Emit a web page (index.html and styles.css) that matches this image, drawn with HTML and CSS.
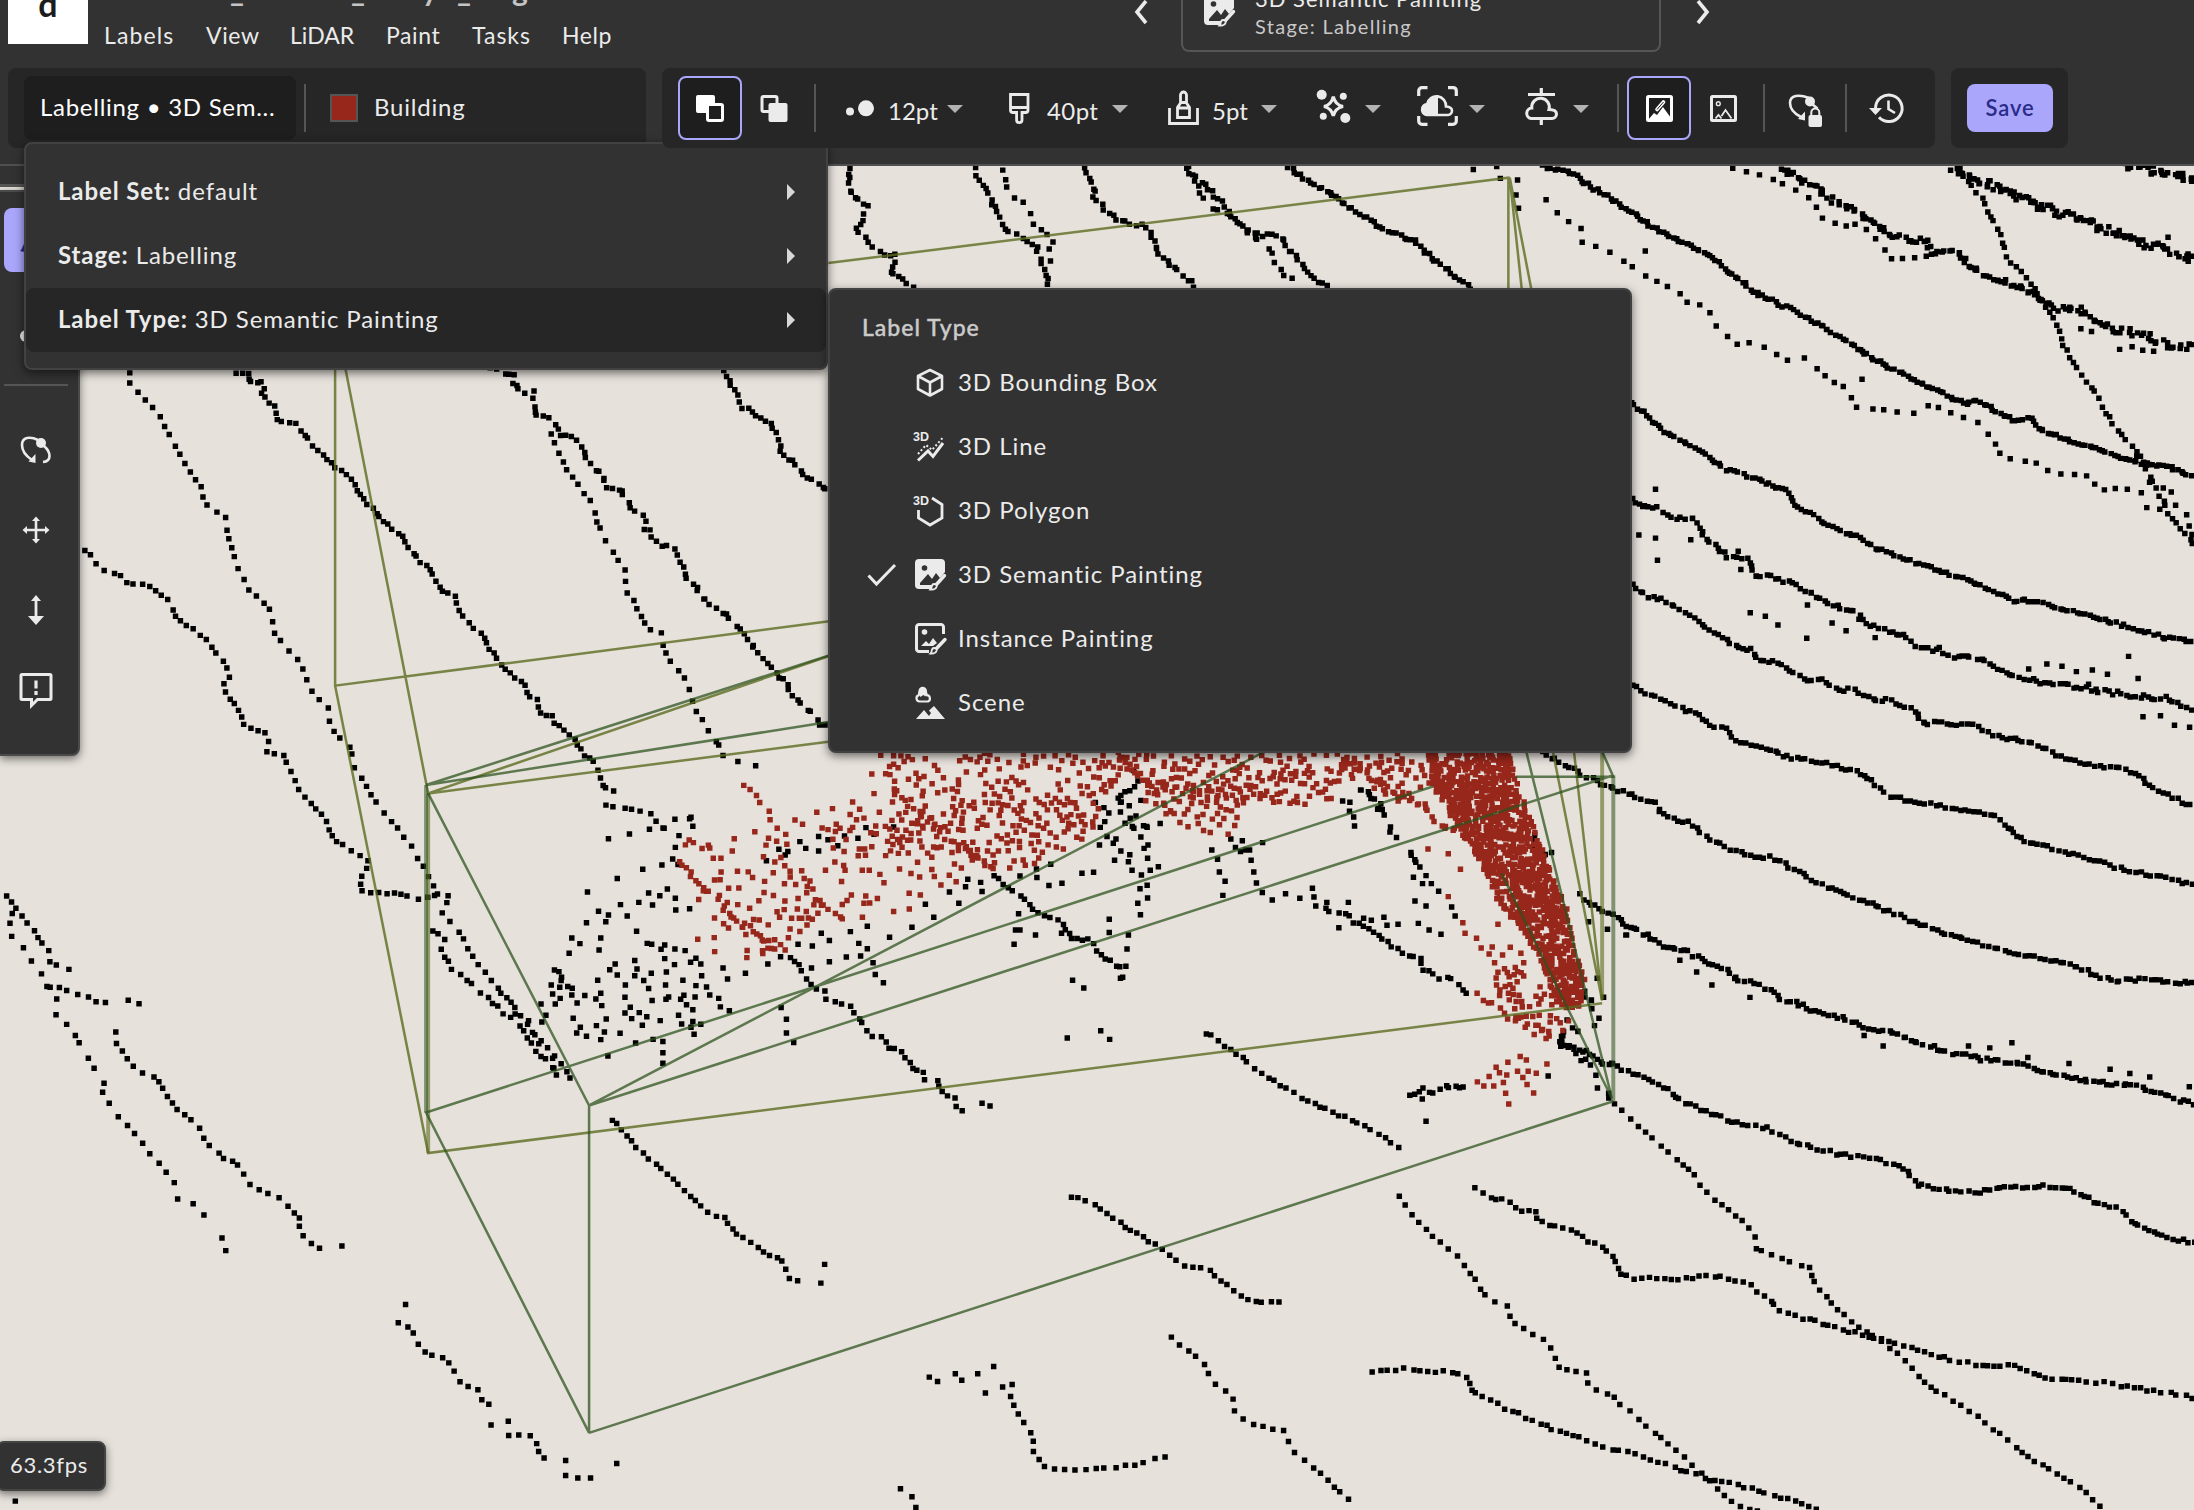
FILE: index.html
```html
<!DOCTYPE html>
<html lang="en">
<head>
<meta charset="utf-8">
<title>Point cloud labelling</title>
<link rel="stylesheet" href="styles.css">
</head>
<body>
<svg class="defs" aria-hidden="true">
  <symbol id="semantic" viewBox="0 0 32 32">
    <path fill="currentColor" d="M4 0h22a4 4 0 0 1 4 4v9l-5 6-4-5-4 6-4-5-8 9v2h12v4H4a4 4 0 0 1-4-4V4a4 4 0 0 1 4-4z"/>
    <circle cx="9.500" cy="9" r="2.800" fill="#323232"/>
    <path d="M29.500 16.500 20.500 26.500" stroke="currentColor" stroke-width="3.400" stroke-linecap="round"/>
    <path d="M19 25c2 0 3 1.200 2.500 3-.8 2-3.500 2.800-6 2.500 1.200-1 1-2 1.300-3.200.3-1.300 1-2.300 2.200-2.300z" fill="#323232" stroke="currentColor" stroke-width="1.800"/>
  </symbol>
  <symbol id="caret" viewBox="0 0 16 8"><path fill="#b3b3b3" d="M0 0h16L8 8z"/></symbol>
  <symbol id="orbit" viewBox="0 0 40 40">
    <path d="M22 10C14 6 6 7 6 15c0 7 4 11 10 15" fill="none" stroke="currentColor" stroke-width="2.600"/>
    <path fill="currentColor" d="M19.500 24v9l-7-1.500z"/>
    <circle cx="25" cy="13" r="5" fill="currentColor"/>
    <path d="M28 16c7 6 8 15-1 16" fill="none" stroke="currentColor" stroke-width="2.600"/>
  </symbol>
</svg>

<header class="header">
  <div class="topbar">
    <div class="logo"><span>d</span></div>
    <div class="project">
      <div class="project-name"><span>_</span><span>_</span><span>y</span><span>_</span><span>g</span></div>
      <nav class="menubar"><a class="m-labels">Labels</a><a class="m-view">View</a><a class="m-lidar">LiDAR</a><a class="m-paint">Paint</a><a class="m-tasks">Tasks</a><a class="m-help">Help</a></nav>
    </div>
    <svg class="chevron prev" viewBox="0 0 14 28"><path d="M12 2 3 13l9 11"/></svg>
    <div class="task-card">
      <svg class="icon32"><use href="#semantic"/></svg>
      <div class="task-text"><div class="task-name">3D Semantic Painting</div><div class="task-stage">Stage: Labelling</div></div>
    </div>
    <svg class="chevron next" viewBox="0 0 14 28"><path d="M2 2l9 11-9 11"/></svg>
  </div>

  <div class="toolbar">
    <div class="group group-type">
      <div class="type-button"><span>Labelling • 3D Sem...</span></div>
      <i class="sep"></i>
      <i class="swatch"></i>
      <span class="class-name">Building</span>
      <section class="menu main-menu">
        <div class="menu-row"><span><b>Label Set:</b> default</span><i class="arrow"></i></div>
        <div class="menu-row"><span><b>Stage:</b> Labelling</span><i class="arrow"></i></div>
        <div class="menu-row current"><span><b>Label Type:</b> 3D Semantic Painting</span><i class="arrow"></i></div>
      </section>
      <section class="menu sub-menu">
        <h2>Label Type</h2>
        <div class="option"><i class="check"></i>
          <svg class="icon32" viewBox="0 0 32 32"><path d="M15 3 27 9v13L15 28.500 3 22V9zM3 9l12 6.500L27 9M15 15.500v13" fill="none" stroke="currentColor" stroke-width="2.600" stroke-linejoin="round"/></svg><span>3D Bounding Box</span></div>
        <div class="option"><i class="check"></i>
          <svg class="icon32" viewBox="0 0 32 32"><text x="-2" y="10" class="tiny">3D</text><path d="M3 29.500 13 20l5 5.500L28 12" fill="none" stroke="currentColor" stroke-width="3"/><path d="M3 23 11 14l6 5L27.500 7" fill="none" stroke="currentColor" stroke-width="2" stroke-dasharray="2 2.200"/></svg><span>3D Line</span></div>
        <div class="option"><i class="check"></i>
          <svg class="icon32" viewBox="0 0 32 32"><text x="-2" y="10" class="tiny">3D</text><path d="M17 3l10 6.500v13.500L15 30 3.500 23v-8" fill="none" stroke="currentColor" stroke-width="2.800"/></svg><span>3D Polygon</span></div>
        <div class="option"><i class="check"><svg viewBox="0 0 30 24"><path d="M1.500 12.500 9.500 21 28 2" fill="none" stroke="currentColor" stroke-width="3"/></svg></i>
          <svg class="icon32"><use href="#semantic"/></svg><span>3D Semantic Painting</span></div>
        <div class="option"><i class="check"></i>
          <svg class="icon32" viewBox="0 0 32 32"><path d="M28.500 11V4a2.500 2.500 0 0 0-2.500-2.500H4A2.500 2.500 0 0 0 1.500 4v22A2.500 2.500 0 0 0 4 28.500h10" fill="none" stroke="currentColor" stroke-width="3"/><circle cx="9.500" cy="9" r="2.800" fill="currentColor"/><path d="M6 23l5-5 3 3 4-6 4 5-4 3z" fill="currentColor"/><path d="M30 16.500 20.500 26.500" stroke="currentColor" stroke-width="3.400" stroke-linecap="round"/><path d="M19 25c2 0 3 1.200 2.500 3-.8 2-3.500 2.800-6 2.500 1.200-1 1-2 1.300-3.200.3-1.300 1-2.300 2.200-2.300z" fill="#323232" stroke="currentColor" stroke-width="1.800"/></svg><span>Instance Painting</span></div>
        <div class="option"><i class="check"></i>
          <svg class="icon32" viewBox="0 0 32 32"><path d="M4.500 14.500a3.300 3.300 0 0 1-.8-6.400L4.500 5a3.400 3.400 0 0 1 6.500 0l.8 3.200a3.300 3.300 0 0 1 1.200 6.300z" fill="none" stroke="currentColor" stroke-width="2.200"/><path d="M3.500 6.500V4a4.200 4.200 0 0 1 8.400 0v2.500l-1.500 3-2-1.500-3 2z" fill="currentColor"/><path d="M1 32 9 23l5 6 2-3-2-2.500 5-4.500L30 32z" fill="currentColor"/></svg><span>Scene</span></div>
      </section>
    </div>

    <div class="group group-tools">
      <div class="btn active"><svg class="icon40" viewBox="0 0 40 40"><rect x="6" y="7" width="19" height="18" rx="2" fill="currentColor"/><rect x="17.500" y="16.500" width="15" height="16" rx="1.500" fill="#1e1e1e" stroke="currentColor" stroke-width="3"/></svg></div>
      <div class="btn"><svg class="icon40" viewBox="0 0 40 40"><rect x="8" y="8.500" width="15" height="15" rx="1.500" fill="none" stroke="currentColor" stroke-width="3"/><rect x="14.500" y="15" width="19" height="19" rx="2" fill="currentColor"/></svg></div>
      <i class="sep"></i>
      <div class="tool first"><svg class="icon40" viewBox="0 0 40 40"><circle cx="10" cy="23.500" r="4" fill="currentColor"/><circle cx="26" cy="20.300" r="8" fill="currentColor"/></svg><span class="pt p12">12pt</span><svg class="caret"><use href="#caret"/></svg></div>
      <div class="tool"><svg class="icon40" viewBox="0 0 40 40"><path d="M11.500 6.500h17.500v15.500a2.500 2.500 0 0 1-2.500 2.500h-3.500v7.500a2.700 2.700 0 0 1-5.400 0v-7.500H14a2.500 2.500 0 0 1-2.500-2.500zM11.500 19.500H29" fill="none" stroke="currentColor" stroke-width="2.800"/></svg><span class="pt p40">40pt</span><svg class="caret"><use href="#caret"/></svg></div>
      <div class="tool"><svg class="icon40" viewBox="0 0 40 40"><path d="M5.500 20v15.500h28V20M13.500 29.500V19.500l3-4.500V7a3 3 0 0 1 6 0v8l3 4.500v10zM13.500 20h12M16 14.500h7" fill="none" stroke="currentColor" stroke-width="2.800"/></svg><span class="pt p5">5pt</span><svg class="caret"><use href="#caret"/></svg></div>
      <div class="tool bare"><svg class="icon40" viewBox="0 0 40 40"><g fill="currentColor"><circle cx="8.700" cy="6.700" r="5"/><circle cx="30.300" cy="8.300" r="3.500"/><circle cx="10.300" cy="28.300" r="3.500"/><circle cx="32.300" cy="30" r="5"/></g><path d="M20.300 8.500Q22 16.700 30 18.500 22 20.300 20.300 28 18.500 20.300 11 18.500 18.500 16.700 20.300 8.500z" fill="none" stroke="currentColor" stroke-width="3.200"/></svg><svg class="caret"><use href="#caret"/></svg></div>
      <div class="tool bare"><svg class="icon40" viewBox="0 0 40 40"><path d="M1.700 8V3a3.300 3.300 0 0 1 3.300-3.300h5.500M31 -.300h5.500A3.300 3.300 0 0 1 39.300 3v5M39.300 28v5a3.300 3.300 0 0 1-3.300 3.300h-5M10.500 36.300H5A3.300 3.300 0 0 1 1.700 33v-5" fill="none" stroke="currentColor" stroke-width="3.200"/><path d="M11 27a5.500 5.500 0 0 1-.8-11A9.500 9.500 0 0 1 29 18.500c3 .2 6 1 6 4.300A4.300 4.300 0 0 1 31 27z" fill="none" stroke="currentColor" stroke-width="2.600"/><path d="M21 9v19H11a6.500 6.500 0 0 1-.5-13A10 10 0 0 1 21 9z" fill="currentColor"/></svg><svg class="caret"><use href="#caret"/></svg></div>
      <div class="tool bare"><svg class="icon40" viewBox="0 0 40 40"><path d="M20.300 0v6M7 6.500h27M20.300 31v6" stroke="currentColor" stroke-width="3.200"/><path d="M10 30.500a5.300 5.300 0 0 1 .8-10.500A8.800 8.800 0 1 1 28 21.500c4 0 7.500 1 7.500 4.500a4.500 4.500 0 0 1-4.500 4.500z" fill="none" stroke="currentColor" stroke-width="3"/></svg><svg class="caret"><use href="#caret"/></svg></div>
      <i class="sep after-tools"></i>
      <div class="btn active"><svg class="icon40" viewBox="0 0 40 40"><rect x="8.500" y="8.500" width="24" height="24" rx="1" fill="none" stroke="currentColor" stroke-width="3"/><path d="M9 32l6-7 3 2 6-8 8 11v2z" fill="currentColor"/><path d="M18 21.500 24.500 14" stroke="currentColor" stroke-width="3.600" stroke-linecap="round"/><path d="M18 21.500 24.500 14" stroke="#1e1e1e" stroke-width="1"/></svg></div>
      <div class="btn"><svg class="icon40" viewBox="0 0 40 40"><rect x="8.500" y="8.500" width="24" height="24" rx="1" fill="none" stroke="currentColor" stroke-width="3"/><circle cx="15.300" cy="15.700" r="1.900" fill="none" stroke="currentColor" stroke-width="1.400"/><path d="M12.500 30.500 15.500 27l3 3.500M18.500 28l4-6 6 8.500" fill="none" stroke="currentColor" stroke-width="1.800"/></svg></div>
      <i class="sep"></i>
      <div class="btn"><svg class="icon40" viewBox="0 0 40 40"><path d="M24 10C14 6 5 7 5 15c0 7 5 11 11 14" fill="none" stroke="currentColor" stroke-width="2.600"/><path fill="currentColor" d="M20 23.500v9l-7-1.500z"/><circle cx="25" cy="13.500" r="5" fill="currentColor"/><path d="M27 16l5.500 4.500" stroke="currentColor" stroke-width="2.600"/><rect x="23.500" y="27" width="13.500" height="12" rx="2" fill="currentColor"/><path d="M26.300 28v-3.500a4 4 0 0 1 8 0V28" fill="none" stroke="currentColor" stroke-width="2"/></svg></div>
      <i class="sep"></i>
      <div class="btn"><svg class="icon40" viewBox="0 0 40 40"><path d="M8.500 20A13.300 13.300 0 1 1 12 29.300" fill="none" stroke="currentColor" stroke-width="3"/><path d="M2 20h13l-6.500 7z" fill="currentColor"/><path d="M21.500 12.500V21l6.500 4" fill="none" stroke="currentColor" stroke-width="2.600"/></svg></div>
    </div>

    <div class="group group-save"><button class="save">Save</button></div>
  </div>
</header>

<main class="viewport">
  <svg class="scene" viewBox="0 118.600 1568 960.500" preserveAspectRatio="none">
    <path id="black-points" fill="#000"/>
    <path id="red-points" fill="#97261b"/>
    <g class="olive">
      <path d="M239.500 250V490L646 437M247 264 306 567 592 469M306 567 592 530M239.500 490 306 824 1145 717M592 188 1078 127V220M1079 127 1089 220M1079 127 1097 220M1110 538 1145 715M1125 538 1145 715"/>
      <path class="thick" d="M306 567V824M1145 530V714"/>
    </g>
    <g class="green">
      <path d="M304.500 561 592 468.500M304.500 561 592 516M306 567 421 790V1024L304.500 795 583 705 1024 562M421 790 904 537M421 790 1153 554M421 1024 1153 787M1083 555H1153L1145 537M1091 538 1152 785 1073 624"/>
      <path class="thick" d="M304.500 561V795M1153 554V787"/>
    </g>
  </svg>
  <div class="strip"></div>
  <aside class="sidebar">
    <div class="side-btn selected"><svg class="icon40" viewBox="0 0 40 40"><path d="M4 31c3-2 3-9 7-9h13v9c-6 0-14 2-20 0z" fill="#2b2b8a"/></svg></div>
    <div class="side-btn"><svg class="icon40" viewBox="0 0 40 40"><circle cx="10" cy="20" r="6" fill="currentColor"/></svg></div>
    <hr>
    <div class="side-btn"><svg class="icon40"><use href="#orbit"/></svg></div>
    <div class="side-btn"><svg class="icon40" viewBox="0 0 40 40"><path d="M20 9v22M9 20h22" stroke="currentColor" stroke-width="2.600"/><path fill="currentColor" d="M20 6.500l4 4.500h-8zM20 33.500l4-4.500h-8zM6.500 20l4.500-4v8zM33.500 20 29 16v8z"/></svg></div>
    <div class="side-btn"><svg class="icon40" viewBox="0 0 40 40"><path d="M20 8v20" stroke="currentColor" stroke-width="2.800"/><path fill="currentColor" d="M20 5l5 6H15zM12 26h16l-8 9z"/></svg></div>
    <div class="side-btn"><svg class="icon40" viewBox="0 0 40 40"><path d="M6 4.500h28a1 1 0 0 1 1 1v23a1 1 0 0 1-1 1H21.500L15.500 35.500V29.500H6a1 1 0 0 1-1-1V5.500a1 1 0 0 1 1-1z" fill="none" stroke="currentColor" stroke-width="3"/><path d="M20 10.500v8M20 21v4" stroke="currentColor" stroke-width="3.200"/></svg></div>
  </aside>
  <div class="fps">63.3fps</div>
</main>
<script src="cloud.js"></script>
</body>
</html>
```

FILE: styles.css
```css
* { box-sizing: border-box; }
body {
  margin: 0;
  width: 2194px;
  height: 1510px;
  overflow: hidden;
  display: flex;
  flex-direction: column;
  background: #323232;
  color: #ebebeb;
  font: 24px/32px Lato, "Open Sans", sans-serif;
}
.defs { position: absolute; width: 0; height: 0; }
svg { display: block; flex: none; overflow: visible; }
i { display: block; flex: none; font-style: normal; }

.header { flex: none; height: 166px; border-bottom: 2px solid #505050; position: relative; z-index: 2; background: #323232; }
.topbar { height: 68px; display: flex; align-items: flex-start; padding-left: 8px; }
.logo { width: 80px; height: 44px; background: #fff; color: #1c1c1c; overflow: hidden; text-align: center; font-weight: 700; font-size: 34px; line-height: 8px; }
.logo span { display: block; }
.project { width: 1046px; padding-left: 16px; }
.project-name { height: 8px; overflow: hidden; display: flex; color: #c4c4c4; font-size: 30px; font-weight: 700; line-height: 0; padding-left: 126px; }
.project-name span { width: 121px; margin-top: -11px; }
.project-name span:nth-child(2) { width: 71px; }
.project-name span:nth-child(3) { width: 35px; }
.project-name span:nth-child(4) { width: 55px; }
.menubar { display: flex; padding-top: 11px; font-size: 23px; letter-spacing: .6px; }
.m-labels { width: 102px; letter-spacing: 1.1px; }
.m-view { width: 84px; }
.m-lidar { width: 96px; letter-spacing: 0; }
.m-paint { width: 86px; }
.m-tasks { width: 90px; letter-spacing: 1px; }
.chevron { width: 14px; height: 28px; margin-top: -1px; fill: none; stroke: #ebebeb; stroke-width: 3.600; }
.task-card { width: 480px; height: 52px; margin: 0 35px 0 33px; border: 2px solid #555; border-top: 0; border-radius: 0 0 8px 8px; display: flex; padding-left: 21px; overflow: hidden; }
.task-card .icon32 { margin-top: -5px; }
.task-text { margin: -17px 0 0 19px; white-space: nowrap; }
.task-name { height: 27px; font-size: 22px; letter-spacing: 1px; }
.task-stage { font-size: 20px; color: #c8c8c8; letter-spacing: 1.3px; }
.icon32 { width: 32px; height: 32px; }
.icon40 { width: 40px; height: 40px; }

.toolbar { display: flex; gap: 16px; padding-left: 8px; }
.group { height: 80px; border-radius: 8px; background: #262626; display: flex; align-items: center; position: relative; }
.group-type { width: 638px; padding-left: 16px; }
.type-button { width: 272px; height: 64px; border-radius: 8px; background: #1e1e1e; color: #fff; padding: 15px 16px; white-space: nowrap; letter-spacing: .72px; }
.sep { width: 2px; height: 48px; margin: 0 8px; background: #555; }
.swatch { width: 28px; height: 28px; margin: 0 16px; border: 2px solid #555; background: #97261b; }
.class-name { letter-spacing: .8px; margin-top: -2px; }
.group-tools { width: 1273px; padding-left: 16px; }
.btn { width: 64px; height: 64px; display: flex; align-items: center; justify-content: center; border-radius: 8px; }
.btn.active { border: 2px solid #a9a6fb; background: #1e1e1e; color: #fff; }
.tool { display: flex; align-items: center; margin-left: 36px; }
.tool.first { margin-left: 16px; }
.pt { margin: 5px 12px 0 8px; white-space: nowrap; }
.p12 { width: 47px; }
.p40 { width: 53px; letter-spacing: .4px; }
.p5 { width: 37px; }
.caret { width: 16px; height: 8px; margin-top: 2px; }
.bare .caret { margin-left: 12px; }
.sep.after-tools { margin-left: 28px; }
.group-save { width: 117px; padding-left: 16px; }
.save { width: 86px; height: 48px; padding: 0; border: 0; border-radius: 8px; background: #a9a6fb; color: #2b2b8a; font: 600 22px/32px Lato, sans-serif; letter-spacing: .9px; }

.menu { position: absolute; background: #323232; border: 2px solid #424242; border-radius: 8px; box-shadow: 0 3px 10px rgba(0,0,0,.55); }
.main-menu { left: 16px; top: 74px; width: 804px; height: 228px; padding-top: 16px; }
.menu-row { height: 64px; border-radius: 8px; display: flex; align-items: center; justify-content: space-between; padding: 0 31px 0 32px; letter-spacing: .9px; }
.menu-row span { padding-bottom: 2px; }
.menu-row.current { background: #262626; }
.arrow { border: 8px solid transparent; border-left-color: #d8d8d8; border-right: 0; }
.sub-menu { left: 820px; top: 220px; width: 804px; height: 465px; padding: 20px 32px 0; }
.sub-menu h2 { margin: 0 0 7px; font-size: 23px; font-weight: 500; line-height: 34px; color: #cbcbcb; letter-spacing: 1px; -webkit-text-stroke: .4px #cbcbcb; }
.option { height: 64px; display: flex; align-items: center; }
.check { width: 30px; height: 24px; margin: 0 18px 0 5px; }
.option span { margin: -2px 0 0 11px; letter-spacing: .95px; }
.tiny { font: 700 12.500px "Liberation Sans", sans-serif; fill: currentColor; letter-spacing: 0; }

.viewport { flex: 1; position: relative; background: #e6e1db; overflow: hidden; }
.scene { width: 2194px; height: 1344px; }
.olive, .green { fill: none; stroke-width: 1.800; }
.olive { stroke: rgba(92,108,32,.8); }
.green { stroke: rgba(45,82,28,.74); }
.thick { stroke-width: 2.800; opacity: .75; }
.strip { position: absolute; left: 0; top: 0; width: 80px; height: 21px; background: #323232; border-bottom: 3px solid #555; }
.sidebar { position: absolute; left: 0; top: 24px; width: 80px; height: 566px; background: #323232; border: 2px solid #4a4a4a; border-left: 0; border-radius: 0 8px 8px 0; padding: 16px 0 0 4px; box-shadow: 0 3px 9px rgba(0,0,0,.5); }
.side-btn { width: 64px; height: 64px; margin-bottom: 16px; border-radius: 8px; display: flex; align-items: center; justify-content: center; }
.selected { background: #a9a6fb; margin-bottom: 22px; }
.sidebar hr { width: 64px; height: 2px; margin: 26px 0 32px; border: 0; background: #555; }
.side-btn + hr { margin-top: 10px; }
.selected { margin-bottom: 32px; }
.fps { position: absolute; left: -4px; top: 1275px; width: 110px; height: 50px; padding: 6px 12px; background: #323232; border: 2px solid #444; border-radius: 8px; font-size: 22px; box-shadow: 0 3px 9px rgba(0,0,0,.5); letter-spacing: .7px; }
```

FILE: cloud.js
```js
// Seeded generator keeps the cloud identical on every load.
let seed = 7;
const rand = () => {
  seed = (seed * 1664525 + 1013904223) >>> 0;
  return seed / 4294967296;
};

const DOT = 3.9;
const paths = { black: [], red: [] };
const dot = (color, x, y) =>
  paths[color].push(`M${(x - DOT / 2).toFixed(1)} ${(y - DOT / 2).toFixed(1)}h${DOT}v${DOT}h-${DOT}z`);

// Scan tiles: origin and scale of the coordinates used by a set of points.
const tiles = {
  world: [0, 0, 1, 1],
  near: [357.3, 528.8, 0.319, 0.2382],
  tower: [843.3, 528.8, 0.2735, 0.2382],
  far: [1143.4, 114.3, 0.2707, 0.2735],
  left: [0, 600.3, 0.4558, 0.3054],
  right: [714.6, 643.2, 0.5442, 0.278],
  top: [986.2, 0, 0.371, 0.2382]
};

const parse = (tile, text) => {
  const [ox, oy, sx, sy] = tiles[tile];
  return text.trim().split(/\s+/).map(p => {
    const [x, y] = p.split(',').map(Number);
    return [ox + x * sx, oy + y * sy];
  });
};

// A scan line: dots at a regular step along a polyline, with some noise.
function scan(color, tile, step, noise, text) {
  const pts = parse(tile, text);
  const spread = noise + 1.1;
  let carry = 0;
  for (let i = 1; i < pts.length; i++) {
    const [x0, y0] = pts[i - 1], [x1, y1] = pts[i];
    const len = Math.hypot(x1 - x0, y1 - y0);
    let d = carry;
    for (; d < len; d += step * (.8 + rand() * .5)) {
      dot(color, x0 + (x1 - x0) * d / len + (rand() - .5) * spread, y0 + (y1 - y0) * d / len + (rand() - .5) * spread);
    }
    carry = d - len;
  }
}

const single = (color, tile, text) => parse(tile, text).forEach(p => dot(color, ...p));

// Fill of a polygon with evenly spread random dots.
function fill(color, count, gap, text) {
  const poly = parse('world', text);
  const xs = poly.map(p => p[0]), ys = poly.map(p => p[1]);
  const x0 = Math.min(...xs), x1 = Math.max(...xs), y0 = Math.min(...ys), y1 = Math.max(...ys);
  const placed = [];
  for (let tries = 0; placed.length < count && tries < count * 40; tries++) {
    const x = x0 + rand() * (x1 - x0), y = y0 + rand() * (y1 - y0);
    let inside = false;
    for (let i = 0, j = poly.length - 1; i < poly.length; j = i++) {
      const [xi, yi] = poly[i], [xj, yj] = poly[j];
      if ((yi > y) !== (yj > y) && x < (xj - xi) * (y - yi) / (yj - yi) + xi) inside = !inside;
    }
    if (!inside || placed.some(p => Math.hypot(p[0] - x, p[1] - y) < gap)) continue;
    placed.push([x, y]);
    dot(color, x, y);
  }
}

// Left of the boxes
scan('black', 'world', 7.6, 0, '93,266 92,274 113,295 129,327 145,350 145,358 163,371 162,380 170,406 178,422 193,435 196,453 215,474 224,498 234,504 237,521 251,535 251,544 270,575 293,603 306,626 313,640 322,640 316,652 328,665 335,681 342,689 365,716 381,738 406,765');
scan('black', 'world', 6, .5, '60,393 73,407 88,412 91,417 104,417 119,428 127,443 140,450 152,463 165,481 158,491 172,509 172,517 192,525 191,538 202,540 212,560 218,570 230,582 238,599 253,610 264,616 259,627 256,637 284,639 299,643 313,640');
scan('black', 'world', 5.5, 2, '308,665 317,672 314,681 331,699 341,707 355,719 374,736 384,751 399,769');
scan('black', 'world', 4.6, 1, '169,266 180,267 178,273 189,274 186,282 198,293 197,299 211,303 218,312 241,335 252,342 258,355 281,379 288,381 291,391 309,410 316,423 324,426 333,443 346,455 353,469 364,480 367,485 374,487 376,497 384,500 386,510 395,511 395,516 409,526 418,540 424,542 431,563 438,565');
scan('black', 'world', 6, 1, '433,575 464,580 475,592');
scan('black', 'world', 4.2, 2.4, '352,264 368,268 368,279 381,281 382,297 395,301 400,310 408,311 421,330 432,341 435,350 444,350 450,363 459,369 464,382 477,391 483,394 488,407 500,425 520,440 545,470 570,500 592,522');
scan('black', 'world', 7.4, .5, '394,310 403,333 423,360 427,375 448,411 447,420 463,449 472,453 476,469 492,488 495,505 500,512 514,532');
scan('black', 'world', 3.8, 2, '517,265 530,290 552,303 560,325 592,352');
single('black', 'near', '490,15 500,47 533,65 573,77');

// Between the menu and the top edge
scan('black', 'world', 3.9, 2, '606,120 607,138 620,148 612,165 630,180 640,183 636,195 655,206');
scan('black', 'world', 4, 2, '697,120 706,140 712,150 718,165 740,175 745,190 750,206');
scan('black', 'world', 7, 2, '717,122 722,138 734,146 738,160 752,170 750,190');
scan('black', 'world', 3.6, 2, '776,120 783,143 800,158 822,163 826,180 856,206');
scan('black', 'world', 6, 4, '850,120 858,140 880,156 905,176 925,204');
scan('black', 'world', 3.3, 2, '848,120 870,142 890,165 915,170 930,190 950,206');
scan('black', 'world', 2.8, 1.6, '921,120 950,138 986,162 1010,172 1030,190 1052,206');

// Far rings
scan('black', 'world', 2.5, 1.2, '1103,119 1123,124 1143,137 1170,154 1179,161 1222,183 1254,209 1287,224 1349,262 1403,288 1414,287 1438,300 1452,299 1457,307 1493,319 1533,332 1547,332 1568,340');
scan('black', 'world', 2.2, 3.6, '1273,120 1306,140 1357,170 1376,172 1382,180 1398,181 1414,195 1444,205 1468,220 1482,220 1509,235 1533,239 1549,247 1568,248');
scan('black', 'world', 1.7, 4.6, '1395,120 1430,135 1468,151 1522,170 1568,185');
scan('black', 'world', 1.8, 5, '1520,118 1549,124 1568,128');
scan('black', 'world', 4.8, 1, '1403,125 1420,147 1430,169 1434,183 1452,202 1468,229 1478,254 1498,281 1509,303 1525,319 1541,348 1552,371 1568,388');
scan('black', 'world', 9, 5, '1525,325 1545,350 1560,364 1568,385');
scan('black', 'world', 8.5, 0, '1238,120 1271,129 1295,143 1304,157 1319,162 1330,160 1346,176 1348,185 1378,183');
scan('black', 'world', 9.5, 0, '1105,143 1116,156 1132,164 1131,176 1144,176 1158,185 1172,195 1203,211 1208,218 1219,218 1227,235 1241,246 1254,244 1276,257 1289,256 1308,272 1317,275 1327,291 1367,295 1380,289 1388,293 1413,302 1426,317 1431,327 1459,331 1465,338 1494,340 1500,350 1529,349 1535,364 1552,364');
single('black', 'top', '180,508 225,500 232,535 265,540 262,585 267,625');
scan('black', 'world', 2.9, 1, '1166,287 1189,308 1216,322 1233,336 1249,340 1277,351 1281,359 1309,377 1330,384 1341,392 1394,411 1411,416 1438,429 1452,429 1493,440 1549,456 1568,458');
scan('black', 'world', 3.1, 2.2, '1166,355 1172,362 1183,362 1195,370 1211,370 1219,385 1233,397 1248,400 1254,411 1273,414 1291,422 1306,432 1327,438 1333,447 1357,452 1373,464 1387,464 1398,470 1414,470 1428,479 1452,486 1476,490 1495,493 1539,499 1549,499 1568,507');
single('black', 'far', '147,860 103,980 147,988 240,992 152,1046 365,1022 372,1070 397,1183 437,1192 470,1215 546,1250 548,1163 613,1210 650,1230 727,1248 1132,1330 1180,1317 1220,1323 1258,1337 1300,1333 1340,1344 1396,1297 1421,1355 1434,1455 1480,1452 1517,1477 1557,1482 120,238 692,573 1270,441 1298,448 1372,495 1405,488 1433,497 1462,500 1290,1370 1500,202');
scan('black', 'world', 3.4, 1.2, '1166,418 1178,426 1189,429 1208,441 1227,453 1244,464 1252,464 1257,473 1268,473 1292,486 1303,486 1317,494 1325,492 1341,501 1348,499 1368,508 1376,518 1384,515 1395,519 1409,516 1425,526 1455,531 1466,538 1487,545 1520,550 1545,566 1568,577');
scan('black', 'world', 3.5, 1.2, '1166,490 1189,501 1211,510 1225,519 1232,520 1241,529 1260,534 1279,541 1295,543 1330,552 1352,570 1400,578 1425,583 1445,600 1480,610 1520,622 1568,632');
scan('black', 'world', 3.4, 1.4, '1102,538 1130,553 1152,563 1185,575 1186,581 1207,588 1221,599 1237,607 1254,613 1267,613 1300,632 1329,643 1379,663 1432,680 1476,688 1510,701 1535,700 1568,703');
scan('black', 'world', 3.2, 2, '1128,640 1152,654 1174,667 1189,676 1207,680 1218,688 1234,692 1240,700 1259,704 1272,713 1302,724 1357,740 1400,754 1444,761 1476,770 1531,777 1568,790');
single('black', 'right', '1135,348 1160,375 1272,375 1300,380 1329,367 1404,420 1350,405 1458,435 1484,446 1510,455 1562,480 893,155 915,185 935,218 985,250 822,90 798,75');
scan('black', 'world', 3.8, 1.4, '1115,745 1150,760 1188,777 1204,788 1242,803 1264,806 1281,816 1313,825 1340,827 1362,836 1370,846 1384,850 1417,852 1427,848 1476,848 1498,859 1515,864 1525,875 1547,884 1568,888');
scan('black', 'world', 6.4, .4, '1150,785 1177,810 1210,838 1218,850 1253,880 1255,893 1294,907 1297,918 1319,941 1357,968 1378,991 1406,1007 1455,1045 1487,1063 1504,1079');
scan('black', 'world', 5, 1.2, '1055,848 1068,857 1076,856 1085,866 1097,865 1101,874 1123,879 1155,899 1156,910 1166,914 1199,914 1223,911 1248,916 1275,938 1313,949 1368,963 1400,974 1444,977 1460,985 1509,989 1568,999');
scan('black', 'world', 6.8, .4, '1000,855 1014,874 1041,898 1063,927 1079,934 1079,943 1106,960 1115,977 1134,982 1135,991 1150,996 1183,1024 1215,1052 1242,1077 1262,1080');
scan('black', 'world', 5.4, 1, '980,980 1008,978 1047,982 1052,995 1096,1016 1128,1027 1150,1035 1177,1042 1215,1055 1259,1066 1302,1079');

// Foreground segments
scan('black', 'world', 5.2, .8, '862,738 878,749 905,770 943,791 970,802 1002,821');
scan('black', 'world', 5.4, .8, '766,855 783,861 802,875 829,892 845,904 862,907 889,928 902,931 919,930');
scan('black', 'world', 7.2, .5, '837,956 859,973 867,988 881,999 882,1009 897,1019 919,1023 924,1038 946,1055 970,1078');
scan('black', 'world', 6.8, .5, '723,989 723,1002 739,1027 739,1037 745,1048 761,1051 804,1048 834,1040');
single('black', 'left', '1457,1257 1470,1267 1498,1249 1508,1264 1533,1249 1558,1232 1545,1294 1572,1280 1412,1518 1430,1537 1436,1562 348,931 354,961 201,375 218,383 536,950 1287,1037 1293,993 797,1360 770,1369 887,1452 887,1487 906,1493 926,1493 967,1459 636,1087 24,1547');
scan('black', 'world', 6.5, 1, '4,640 9,645 16,655 36,681 36,689 52,694');
scan('black', 'world', 9, 1, '8,652 6,666 20,681 30,699 41,714 41,725 54,740 74,774 74,784 100,815 126,846 127,856 139,861 146,869');
scan('black', 'world', 7.5, 1, '36,706 45,706 67,715 77,717');
scan('black', 'world', 6.8, .5, '82,737 84,746 99,766 113,771 127,795 140,802 146,814 160,829 169,830 180,848 201,857 215,871 213,881 224,890 232,893');
scan('black', 'world', 5.4, .4, '438,800 458,823 483,844 508,868 518,870 525,880 546,895 558,900 564,913 570,916');
scan('black', 'world', 6.8, .5, '284,946 293,948 303,966 319,971 330,988 344,995 345,1004 355,1004');
scan('black', 'world', 6.6, 1, '364,1025 382,1027 387,1042 394,1046');

// Unlabelled points round the painted roof
scan('black', 'near', 5, 1, '630,650 658,652 685,715 708,748 728,758 735,785 777,793 800,828 830,885 857,887 875,925 897,933 930,990 950,995 953,1027');
scan('black', 'near', 4.2, 1.2, '1110,405 1140,450 1165,465 1210,520 1255,545 1280,595 1315,597 1355,655 1385,680 1410,675');
scan('black', 'near', 5, 1, '983,1020 983,1055 1018,1073 1022,1100 1037,1118');
scan('black', 'near', 5, 2.5, '1425,95 1425,140 1380,165 1400,235 1415,270 1450,258');
single('black', 'near', '1080,1090 1098,1098 1283,721 1308,744 1390,715 1395,712 1271,894 1346,872 1366,898 630,803 642,838 642,879 658,908 365,905 365,938 365,970 343,898 304,909 242,948 785,575 804,610 823,626 808,648 836,668 841,704 859,728 823,559 776,651 738,602 720,580 700,618 668,613 738,665 698,684 600,672 550,700 510,717 500,684 873,592 923,562 972,532 953,493 1007,456 1028,490 1043,440 1048,418 1077,427 1080,455 1165,408 1202,387 1203,413 1234,373 1230,437 1259,430 1304,400 1330,397 1162,521 1155,570 1165,570 1152,613 1200,585 1258,580 1365,538 1365,578 1408,585 1405,627 1435,524 1429,490 1451,474 1434,446 1450,436 1437,405 1457,391 1475,380 1451,355 1408,365 1416,391 1377,361 1411,344 1391,333 1443,325 1452,315 1436,291 1374,310 1380,297 1343,315 1360,290 1345,262 1355,245 1334,188 1353,203 1364,219 1392,186 1410,197 1436,181 1400,155 1425,228 1479,251 1450,262 1412,235 597,362 625,328 639,345 645,335 685,325 672,305 714,290 714,333 735,299 757,317 772,288 802,295 820,263 838,283 882,261');
single('black', 'near', '392,238 428,232 425,236 432,259 401,287 393,322 387,357 399,374 363,375 320,388 263,416 196,456 368,265 335,268 290,282 243,296 375,447 333,459 358,467 393,475 394,510 425,506 342,495 311,487 270,494 285,528 243,525 237,545 221,514 194,548 306,574 161,594 179,611 226,594 222,630 155,640 330,610 340,613 369,615 361,628 392,627 415,632 369,656 391,674 427,667 439,655 450,672 452,707 302,662 258,672 246,689 263,705 307,687 302,707 322,722 339,700 373,696 281,735 333,746 371,735 410,721 219,721 122,690 132,695 138,712 137,722 115,735 134,742 118,762 135,775 124,792 152,740 162,745 161,765 190,767 173,789 226,760 215,777 228,797 92,792 103,826 94,846 164,835 180,862 172,879 194,889 216,857 234,876 226,899 238,837 269,880 280,772 292,802 280,819 295,836 312,818 329,830 319,856 359,842 341,782 372,778 378,771 405,778 412,766 437,771 439,737 463,741 470,765 490,775 494,801 514,812 418,794 432,809 400,826 407,852 432,845 428,862 450,853 435,883 2,760 25,787 34,822 64,842 73,877 87,911 118,955 121,985 150,995 157,1014');

// Tower side
scan('black', 'tower', 2.8, 2.5, '470,145 520,190 510,215');
scan('black', 'tower', 5, 4, '535,205 550,260 570,300');
scan('black', 'tower', 3, 1.4, '600,335 630,385');
scan('black', 'tower', 4.5, 1.4, '380,485 390,515 440,520 450,550 480,555 520,590 575,635 630,655 635,690 680,715 710,715 760,770');
scan('black', 'tower', 2.8, 2, '925,285 935,330 975,345');
scan('black', 'tower', 3.4, 4, '1050,750 1075,800');
scan('black', 'tower', 4.2, 5, '1015,850 1045,875 990,885 1000,920');
scan('black', 'tower', 4, 4, '1000,910 1060,945 1085,975');
scan('black', 'tower', 3.6, 5, '600,1058 650,1045 700,1050 760,1040');
single('black', 'tower', '83,330 98,358 103,396 118,424 112,466 133,297 145,322 163,302 158,335 172,330 182,330 186,361 193,396 200,429 216,308 215,458 241,480 276,461 313,475 346,445 350,471 355,498 440,487 415,563 533,532 541,556 570,553 500,541 480,535 425,183 444,187 443,214 454,231 456,258 643,407 610,412 634,431 657,431 676,454 614,483 643,498 710,501 719,528 623,550 651,570 682,583 1090,715 1107,772 1095,835 1083,857 1068,545 1117,568 1167,585 962,1008 643,1144 633,1077 1087,1006 1091,1044 1120,1060 1128,970 1104,972 1048,962 1075,780');

// Painted building points
fill('red', 150, 3.6, '487,598 520,606 560,592 640,570 690,622 640,645 600,650 560,684 530,680 495,640');
fill('red', 240, 3.2, '620,538 815,538 790,570 782,600 745,615 730,625 690,615 640,600 660,570');
fill('red', 190, 2.6, '815,538 1000,538 1040,565 1000,572 960,555 950,575 900,575 850,570 815,560');
fill('red', 50, 3.6, '815,556 890,565 880,600 850,596 820,580');
scan('red', 'near', 3, 5, '870,90 890,160 930,200 1000,285 1060,340 1110,390');
scan('red', 'near', 4, 5, '405,360 430,415 480,470 550,560 630,630');
scan('red', 'near', 4, 3, '690,440 710,480 780,550');
scan('red', 'near', 6.5, 2, '547,130 583,183 608,240 643,297');
scan('red', 'near', 3.2, 5, '1380,40 1450,130 1510,225');
single('red', 'near', '424,300 470,324 525,296 571,275 661,240 710,217 745,206 790,186 762,265 790,262 838,161 833,102 833,320 443,598 480,593 481,635 553,653 589,641 650,567 676,535 700,538 812,532 882,515 917,507 942,465 988,435 1022,425');
fill('red', 880, 1.6, '1020,538 1078,538 1086,565 1096,590 1108,622 1120,650 1126,680 1133,700 1129,722 1114,720 1102,690 1090,668 1072,648 1060,618 1040,590 1024,560');
scan('red', 'tower', 3.2, 4, '440,60 560,170 630,195 680,250 730,280 800,340');
scan('red', 'tower', 4, 5, '780,765 830,805 880,835 930,870 975,900');
fill('red', 40, 3.6, '1060,698 1085,690 1110,712 1125,722 1116,742 1100,735 1076,724');
single('red', 'tower', '648,327 701,341 733,388 794,388 701,470 739,548 745,580 775,595 787,624 816,621 808,642 822,668 843,645 863,622 848,686 860,710 850,740 882,695 898,708 870,745 886,766 831,553 891,640 898,668 630,76 578,88 889,950 905,960 857,967 826,982 835,998 854,1005 808,1010 777,1026 794,1038 820,1038 845,1028 882,994 910,994 931,1000 896,1013 907,1034 924,1059 851,1060 859,1092 959,972');

document.getElementById('black-points').setAttribute('d', paths.black.join(''));
document.getElementById('red-points').setAttribute('d', paths.red.join(''));
```
